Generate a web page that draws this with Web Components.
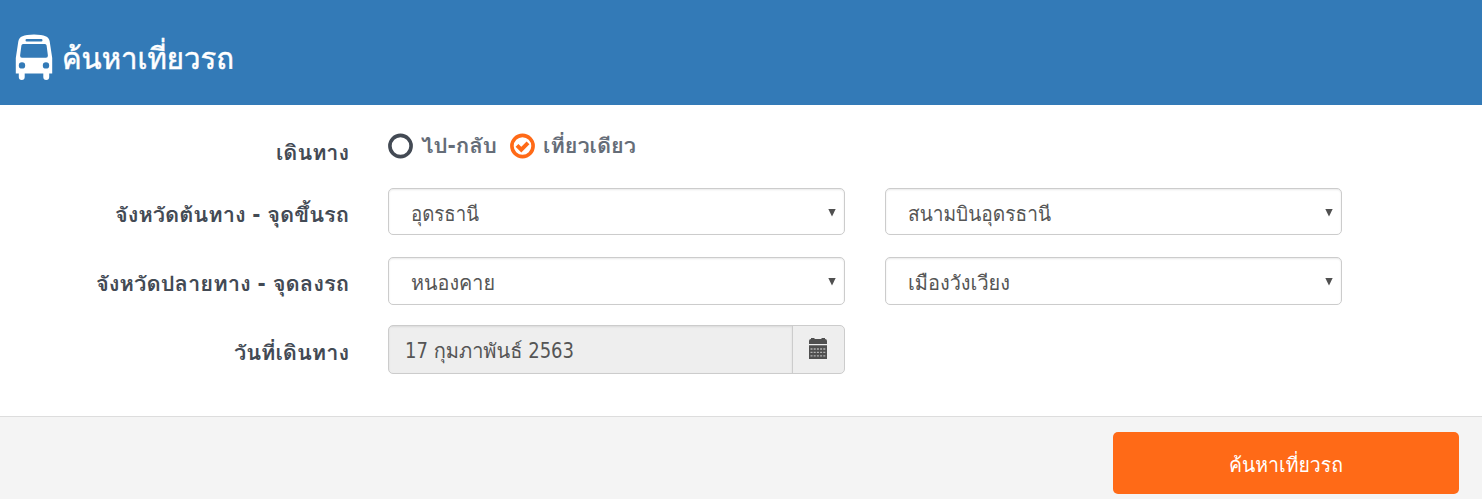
<!DOCTYPE html>
<html lang="th">
<head>
<meta charset="utf-8">
<title>ค้นหาเที่ยวรถ</title>
<style>
html,body{margin:0;height:100%;overflow:hidden;background:#fff;font-family:"DejaVu Sans Condensed",Tahoma,Waree,Loma,"Noto Sans Thai Looped",Garuda,"Noto Sans Thai","Noto Sans",sans-serif}
</style>
</head>
<body>
<trip-search></trip-search>
<script>
const define=(name,html,ready)=>{
  customElements.define(name,class extends HTMLElement{
    connectedCallback(){
      if(this.shadowRoot)return;
      const t=document.createElement('template');
      t.innerHTML=html;
      this.attachShadow({mode:'open'}).append(t.content.cloneNode(true));
      if(ready)ready(this,this.shadowRoot);
    }
  });
};

/* A single line of text set to a given advance width. */
define('fit-text',`<style>
:host{display:inline-block;white-space:nowrap;flex:none;text-align:left}
span{display:inline-block;transform-origin:0 50%}
</style><span><slot></slot></span>`,(el,root)=>{
  const w=+el.getAttribute('w'),s=root.querySelector('span');
  const natural=s.getBoundingClientRect().width;
  if(natural)s.style.transform='scaleX('+w/natural+')';
  el.style.width=w+'px';
});

define('page-header',`<style>
:host{display:flex;align-items:center;height:105px;box-sizing:border-box;padding:9px 0 0 15px;background:#337ab7;color:#fff;font-size:30px;font-weight:500;line-height:44px}
svg{width:38px;height:46px;flex:none;margin-right:9px}
::slotted(*){position:relative;top:2px;-webkit-text-stroke:.5px #fff}
</style>
<svg viewBox="0 0 38 46" fill="#fff"><path fill-rule="evenodd" d="M3.300 7.500Q3.900 3.500 7.500 2.200Q11 .5 19 .5T30.500 2.200Q34.100 3.500 34.700 7.500L37.200 24V39.500H34.200V43a2.900 2.900 0 0 1-5.900 0V39.500H9.700V43a2.900 2.900 0 0 1-5.900 0V39.500H.8V24ZM11.700 5a1.200 1.200 0 0 0 0 2.400H26.300a1.200 1.200 0 0 0 0-2.400ZM8 9.900Q6.700 9.900 6.400 11.500L5.100 21.600Q5 23.800 7 23.800H31Q33 23.800 32.900 21.600L31.600 11.500Q31.300 9.900 30 9.900ZM7 28.200a3.200 3.200 0 1 0 0 6.400a3.200 3.200 0 0 0 0-6.400ZM31 28.200a3.200 3.200 0 1 0 0 6.400a3.200 3.200 0 0 0 0-6.400Z"/></svg>
<slot></slot>`);

define('form-row',`<style>
:host{display:grid;grid-template-columns:348.500px 457px 457px;column-gap:39.500px;height:48px;margin-bottom:20.300px;align-items:center}
.label{text-align:right;font-weight:700;font-size:20.500px;line-height:30px;color:#434a54;padding-top:7px}
</style><div class="label"><slot name="label"></slot></div><slot></slot>`);

define('radio-option',`<style>
:host{display:inline-flex;align-items:center;font-weight:700;font-size:20.500px;line-height:30px;color:#656d78;margin-right:13px}
svg{width:26px;height:26px;margin-right:7px;flex:none}
.tick{display:none}
:host([checked]) .tick{display:block}
svg{color:#434a54}
:host([checked]) svg{color:#ff6a17}
</style><svg viewBox="0 0 26 26" fill="none" stroke="currentColor"><circle cx="12.500" cy="13" r="10.600" stroke-width="3.600"/><path class="tick" d="M7 12.300l4.300 4.300l6.700-6.700" stroke-width="4"/></svg><slot></slot>`);

define('select-box',`<style>
:host{display:flex;align-items:center;justify-content:space-between;box-sizing:border-box;height:48px;border:1px solid #ccc;border-radius:5px;background:#fff;box-shadow:inset 0 1px 2px rgba(0,0,0,.09);padding:5px 8px 0 22px;font-size:20.500px;line-height:30px;color:#555}
svg{width:8px;height:9px;margin-top:-4px}
</style><slot></slot><svg viewBox="0 0 8 9"><path d="M.3 1H7.700L4 8.500Z" fill="#505050"/></svg>`);

define('date-box',`<style>
:host{display:flex;box-sizing:border-box;height:49px;border:1px solid #ccc;border-radius:5px;background:#eee;font-size:20.500px;line-height:30px;color:#555;overflow:hidden}
.value{flex:1;display:flex;align-items:center;padding:3px 0 0 16px;box-shadow:inset 0 1px 2px rgba(0,0,0,.09)}
.icon{width:52px;box-sizing:border-box;border-left:1px solid #ccc;display:flex;align-items:center;justify-content:center}
svg{width:18px;height:21px;margin-top:-2px;margin-right:1px}
</style><div class="value"><slot></slot></div><div class="icon"><svg viewBox="0 0 18 21"><path fill="#4f4f4f" d="M0 6V3Q0 1 2 1V0H5.500V1H12.500V0H16V1Q18 1 18 3V6ZM0 7.200H18V21H0Z"/><path d="M1.500 11H17M1.500 14.400H17M1.500 17.900H17" stroke="#b4b4b4" stroke-width="1.400" stroke-dasharray="2 1.200"/></svg></div>`);

define('page-footer',`<style>
:host{display:flex;justify-content:flex-end;align-items:flex-start;box-sizing:border-box;height:83px;border-top:1px solid #ddd;background:#f4f4f4;padding:15px 23px 0 0}
button{all:unset;box-sizing:border-box;width:346px;height:62px;border-radius:5px;background:#ff6a17;color:#fff;font-size:20.500px;line-height:30px;display:flex;align-items:center;justify-content:center;padding-top:4px}
</style><button type="button"><slot></slot></button>`);

define('trip-search',`<style>
:host{display:block}
main{height:311px;box-sizing:border-box;padding-top:20px}
.first{height:49px;margin-bottom:14.300px}
.radios{display:flex;align-items:center;margin-top:-7px}
.pickup{align-items:start}
.pickup select-box{height:47px}
.pickup fit-text[slot]{margin-top:5px}
</style>
<page-header><fit-text w="172">ค้นหาเที่ยวรถ</fit-text></page-header>
<main>
<form-row class="first"><fit-text slot="label" w="73">เดินทาง</fit-text><div class="radios"><radio-option><fit-text w="76">ไป-กลับ</fit-text></radio-option><radio-option checked><fit-text w="93">เที่ยวเดียว</fit-text></radio-option></div></form-row>
<form-row class="pickup"><fit-text slot="label" w="234">จังหวัดต้นทาง - จุดขึ้นรถ</fit-text><select-box><fit-text w="68">อุดรธานี</fit-text></select-box><select-box><fit-text w="143">สนามบินอุดรธานี</fit-text></select-box></form-row>
<form-row><fit-text slot="label" w="253">จังหวัดปลายทาง - จุดลงรถ</fit-text><select-box><fit-text w="84">หนองคาย</fit-text></select-box><select-box><fit-text w="102">เมืองวังเวียง</fit-text></select-box></form-row>
<form-row><fit-text slot="label" w="115">วันที่เดินทาง</fit-text><date-box><fit-text w="169">17 กุมภาพันธ์ 2563</fit-text></date-box></form-row>
</main>
<page-footer><fit-text w="114">ค้นหาเที่ยวรถ</fit-text></page-footer>`);
</script>
</body>
</html>
